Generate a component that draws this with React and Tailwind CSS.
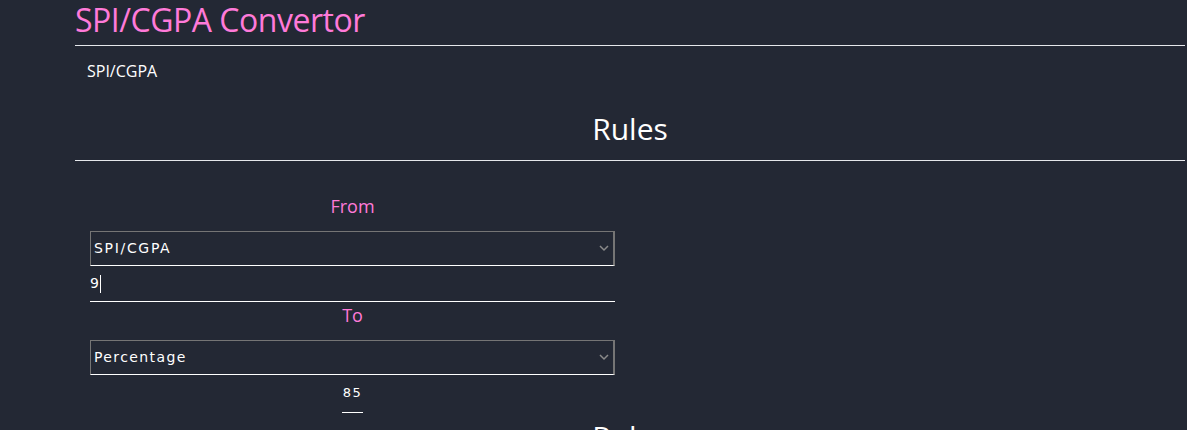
export default function App() {
  return (
    <div className="min-h-[430px] bg-[#232834] text-white" style={{ fontFamily: '"Open Sans", sans-serif' }}>
      <div className="ml-[75px] mr-[2px]">
        <h1 className="text-[32px] leading-[40px] text-[#ff7ad9] tracking-[-0.015em]">SPI/CGPA Convertor</h1>
        <div className="mt-[5px] border-t border-[#e5e7eb]"></div>

        <div className="pl-[12px] pt-[15px] text-[16px] leading-[20px]">SPI/CGPA</div>

        <h2 className="mt-[28px] text-center text-[30px] leading-[40px]">Rules</h2>
        <div className="mt-[11px] border-t border-[#e5e7eb]"></div>

        <div className="pl-[15px] w-[540px] pt-[32px]">
          <div className="text-center text-[18px] leading-[26px] text-[#ff7ad9]">From</div>
          <div className="mt-[12px] h-[35px] border border-[#757575] border-r-2 border-b-white flex items-center justify-between pl-[3px] pr-[4px]">
            <span className="text-[14px] tracking-[0.12em]" style={{ fontFamily: '"DejaVu Sans", sans-serif' }}>SPI/CGPA</span>
            <svg width="10" height="7" viewBox="0 0 10 7" fill="none" stroke="#8a8a8a" strokeWidth="1.5"><path d="M1 1l4 4 4-4" /></svg>
          </div>
          <div className="h-[36px] border-b border-white flex items-center text-[14px]" style={{ fontFamily: '"DejaVu Sans", sans-serif' }}>
            <span>9</span><span className="ml-[1px] inline-block w-px h-[18px] bg-white"></span>
          </div>
          <div className="text-center text-[18px] leading-[26px] text-[#ff7ad9]">To</div>
          <div className="mt-[12px] h-[35px] border border-[#757575] border-r-2 border-b-white flex items-center justify-between pl-[3px] pr-[4px]">
            <span className="text-[14px] tracking-[0.1em]" style={{ fontFamily: '"DejaVu Sans", sans-serif' }}>Percentage</span>
            <svg width="10" height="7" viewBox="0 0 10 7" fill="none" stroke="#8a8a8a" strokeWidth="1.5"><path d="M1 1l4 4 4-4" /></svg>
          </div>
          <div className="flex justify-center">
            <div className="mt-[8px] w-[21px] border-b border-white pb-[9px] text-center text-[13px] tracking-[0.12em]" style={{ fontFamily: '"DejaVu Sans", sans-serif' }}>85</div>
          </div>
        </div>

        <h2 className="mt-[4px] text-center text-[30px] leading-[40px]">Rules</h2>
      </div>
    </div>
  );
}
